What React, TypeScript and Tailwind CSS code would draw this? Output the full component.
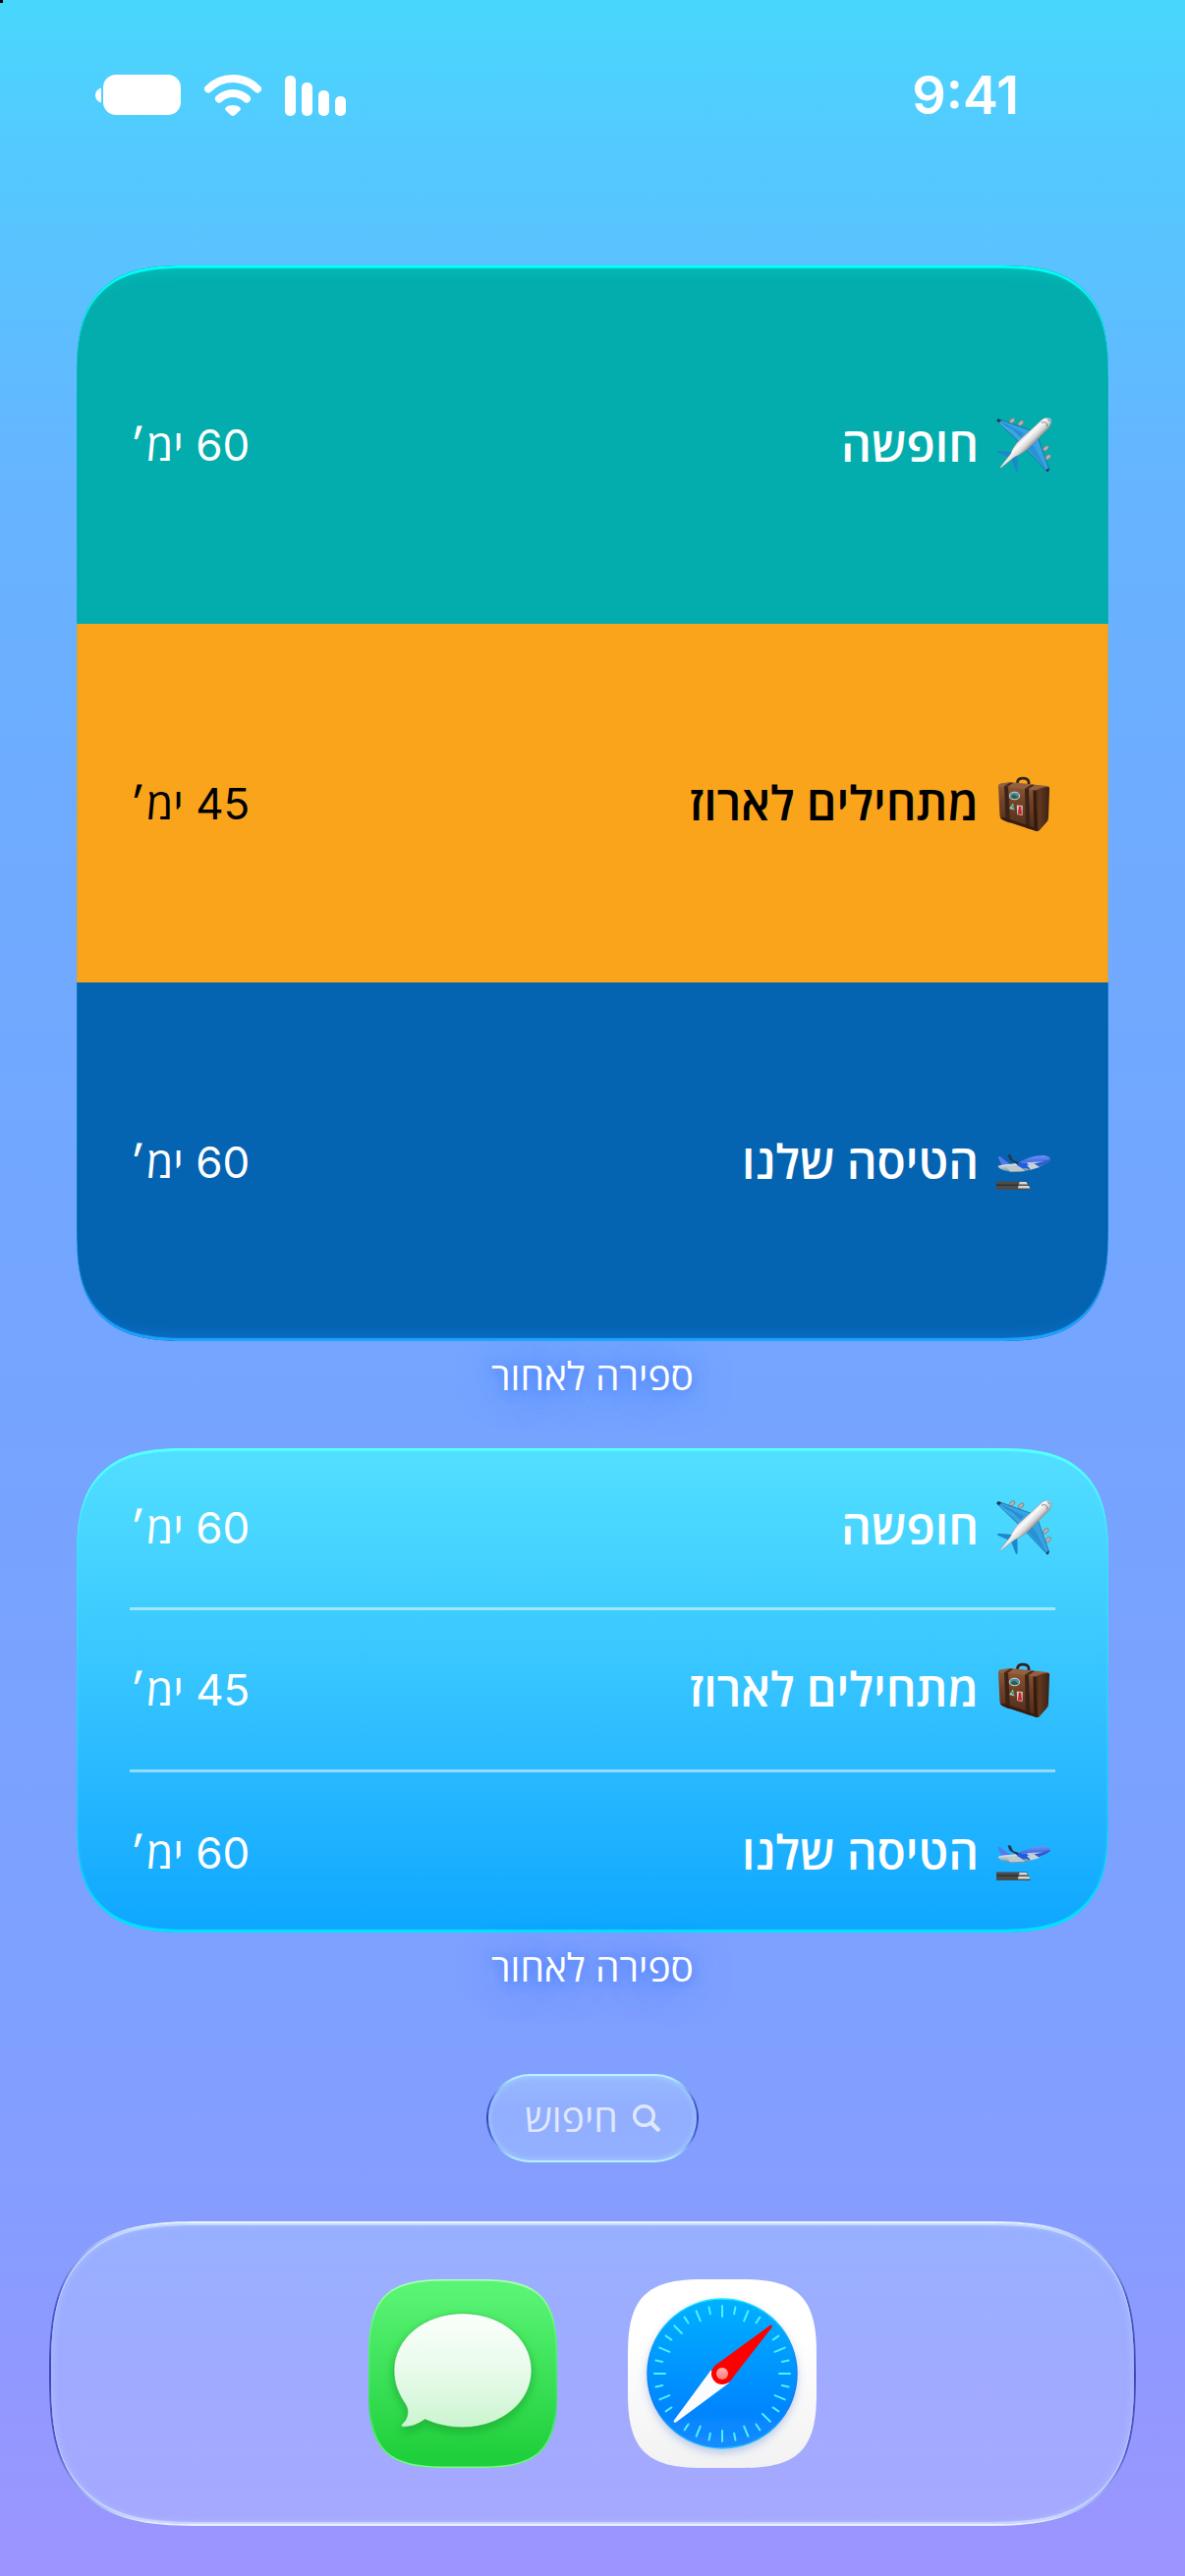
import { type ReactNode } from "react";

const SQUIRCLE =
  "M0 75C0 19 19 0 75 0H117C173 0 192 19 192 75V117C192 173 173 192 117 192H75C19 192 0 173 0 117Z";

function AirplaneIcon() {
  return (
    <svg viewBox="0 0 180 168" className="h-[56px] w-[60px] shrink-0" aria-hidden="true">
      <defs>
        <linearGradient id="fuselage" x1="70" y1="60" x2="105" y2="95" gradientUnits="userSpaceOnUse">
          <stop offset="0" stopColor="#c9c9c9" />
          <stop offset="0.35" stopColor="#fbfbfb" />
          <stop offset="0.65" stopColor="#d8d8d8" />
          <stop offset="1" stopColor="#777" />
        </linearGradient>
      </defs>
      <g fill="#b5b3b1" stroke="#74706e" strokeWidth="2">
        <ellipse cx="48" cy="10" rx="10" ry="6" transform="rotate(-42 48 10)" />
        <ellipse cx="75" cy="17" rx="10" ry="6" transform="rotate(-42 75 17)" />
        <ellipse cx="151" cy="94" rx="10" ry="6" transform="rotate(-42 151 94)" />
        <ellipse cx="158" cy="121" rx="10" ry="6" transform="rotate(-42 158 121)" />
      </g>
      <path d="M1 10L6 4L112 42L72 78Z" fill="#35a3e4" stroke="#1c5f8e" strokeWidth="2" />
      <path d="M156 166L161 158L126 58L90 96Z" fill="#35a3e4" stroke="#1c5f8e" strokeWidth="2" />
      <path d="M14 12L84 48L66 70Z" fill="#258fd2" />
      <path d="M3 14L50 50L74 78L82 68L48 36Z" fill="#53b5ec" opacity=".55" />
      <path d="M154 162L118 92L104 78L94 92L120 122Z" fill="#1f80c0" opacity=".5" />
      <path d="M1 9L6 4L16 9L8 15Z" fill="#16374e" />
      <path d="M152 160L161 154L159 164L155 166Z" fill="#16374e" />
      <path d="M2 106L6 101L52 106L42 124Z" fill="#1e86ca" />
      <path d="M60 165L65 163L64 116L46 128Z" fill="#1e86ca" />
      <path
        d="M142 4C154-2 164 1 167 6C170 14 165 26 158 34L98 94C84 107 70 115 55 121L14 154L11 152L44 110C48 96 60 80 70 70Z"
        fill="url(#fuselage)"
        stroke="#858585"
        strokeWidth="1.5"
      />
      <path d="M138 16C150 10 158 18 154 28" fill="none" stroke="#7d7d7d" strokeWidth="3" />
      <path d="M154 4C161 3 166 8 165 14C161 12 158 8 154 4Z" fill="#5a9bd0" />
    </svg>
  );
}

function SuitcaseIcon() {
  return (
    <svg viewBox="0 0 60 56" className="h-[56px] w-[60px] shrink-0" aria-hidden="true">
      <defs>
        <linearGradient id="case-front" x1="0" y1="0" x2="0" y2="1">
          <stop offset="0" stopColor="#8b5636" />
          <stop offset="0.4" stopColor="#6f4026" />
          <stop offset="1" stopColor="#4f2b19" />
        </linearGradient>
        <linearGradient id="case-side" x1="0" y1="0" x2="1" y2="0">
          <stop offset="0" stopColor="#3c2014" />
          <stop offset="0.3" stopColor="#62391f" />
          <stop offset="1" stopColor="#3b2115" />
        </linearGradient>
      </defs>
      <path d="M21.500 10V6C22 .8 32 .8 33 6V11" fill="none" stroke="#33231c" strokeWidth="2.8" />
      <path d="M2 10Q2 8 4 7.500L14 6L52 10Q54.500 10.500 54 13L40 17Z" fill="#94603d" />
      <path d="M2 10Q20 11 39 14.500L41 56L7 45Q4 44 3.500 40Z" fill="url(#case-front)" />
      <path d="M39 15Q46 11 53 11Q54.500 11.500 54 14L53 42Q53 45 51 47L44 55Q42 56.500 40 55Z" fill="url(#case-side)" />
      <path d="M8 10L12 10.500L14 47.500L9.500 46Z" fill="#3c2318" />
      <path d="M29 12.500L33 13L34.500 54L30 52.500Z" fill="#3c2318" />
      <path d="M8 10L14 6.500L17 7L12 10.500ZM29 12.500L36 8.500L39 9L33 13Z" fill="#4a2c1d" />
      <path d="M37.500 14L40 15L42 56L38.500 55Z" fill="#34190f" />
      <path d="M4 42L8 45L41 56L44 55L40 53L8 42Z" fill="#351c11" />
      <ellipse cx="18.500" cy="20" rx="5.600" ry="4.300" fill="#c3d8d4" />
      <ellipse cx="18.500" cy="20" rx="4.600" ry="3.300" fill="#4d8ca8" />
      <path d="M14.500 21L18 18.500L22.500 21.500Q18 25 14.500 21Z" fill="#315d45" />
      <path d="M13 33L17 27.500L18.500 34.500Z" fill="#a3ccaa" />
      <path d="M15 31L17.500 29L18 34Z" fill="#3d8e8c" />
      <path d="M20.800 29.500L26.800 30L26.600 40L21.200 39Z" fill="#cfc8c4" />
      <path d="M23 30.500L25.200 31L26 39L21.800 38.500Z" fill="#c9252c" />
    </svg>
  );
}

function DepartureIcon() {
  return (
    <svg viewBox="0 0 60 56" className="h-[56px] w-[60px] shrink-0" aria-hidden="true">
      <defs>
        <linearGradient id="jet" x1="0" y1="0" x2="0.150" y2="1">
          <stop offset="0" stopColor="#7ba4ff" />
          <stop offset="0.45" stopColor="#456fe0" />
          <stop offset="0.55" stopColor="#dbe4ea" />
          <stop offset="1" stopColor="#6f8b91" />
        </linearGradient>
      </defs>
      <path d="M1.500 22.500L3.500 22L14 30L11 34L6 32Z" fill="#5879ee" />
      <path
        d="M1.500 32C8 29 16 31 24 27.500C32 23.500 42 20.500 50 21.200C54 22 56 24.500 54.500 26.500C48 31.500 36 36 27 37.500C16 39 7 37 3 34Z"
        fill="url(#jet)"
      />
      <path d="M30 31C40 29 48 27.500 54.800 25C54 29.500 38 34.500 32 35Z" fill="#2f5bd0" />
      <path d="M10 33L23 31L29 37L14 37.500Z" fill="#bcc9ce" />
      <path d="M11.500 20.500L14.500 20.200L17 26L38 33L36 35L24 32L13.500 25.500Z" fill="#24354d" />
      <path d="M22 28.500L31 28.500L35 33.500L27 34.500L21 31Z" fill="#1d5de0" />
      <path d="M31 31L38 29L44 33L35 35.500Z" fill="#c8d2dc" />
      <path d="M0 47.500H31L35 56H0Z" fill="#4b4b4b" />
      <path d="M0 50.500H22V52H0Z" fill="#303030" />
      <path d="M23.500 48H30.500L32 50.500H23ZM22.500 52H33L34.500 54.500H22Z" fill="#d9d9d9" />
    </svg>
  );
}

type Item = { name: string; left: string; icon: ReactNode; tint: string };

const items: Item[] = [
  { name: "חופשה", left: "60 ימ׳", icon: <AirplaneIcon />, tint: "bg-[#04adad] text-white" },
  { name: "מתחילים לארוז", left: "45 ימ׳", icon: <SuitcaseIcon />, tint: "bg-[#faa41c] text-black" },
  { name: "הטיסה שלנו", left: "60 ימ׳", icon: <DepartureIcon />, tint: "bg-[#0564b2] text-white" },
];

function RowContent({ item }: { item: Item }) {
  return (
    <>
      <span className="flex items-center gap-[18px]">
        {item.icon}
        <span className="text-[48px] leading-[60px] font-semibold">{item.name}</span>
      </span>
      <span className="text-[44px] leading-[60px]">{item.left}</span>
    </>
  );
}

function Caption() {
  return (
    <p className="pt-[14px] pb-[20px] text-center text-[39px] leading-[44px] font-medium text-white [text-shadow:0_4px_40px_#3f78ff,0_2px_12px_#4a80ff]">
      ספירה לאחור
    </p>
  );
}

function StatusBar() {
  return (
    <header className="flex items-center justify-between pt-[64px] pr-[169px] pb-[140px] pl-[97px] text-white">
      <time className="text-[54px] leading-[66px] font-semibold">9:41</time>
      <div className="flex items-center gap-[24px]">
        <svg viewBox="0 0 62 42" className="h-[42px] w-[62px]" fill="currentColor" role="img" aria-label="קליטה">
          <rect x="0" y="1" width="11" height="41" rx="5" />
          <rect x="17" y="8" width="11" height="34" rx="5" />
          <rect x="34" y="16" width="11" height="26" rx="5" />
          <rect x="51" y="22" width="11" height="20" rx="5" />
        </svg>
        <svg viewBox="0 0 58 42" className="h-[42px] w-[58px]" fill="none" stroke="currentColor" role="img" aria-label="אלחוטי">
          <path d="M4 14.500C18 .5 40 .5 54 14.500" strokeWidth="8" strokeLinecap="round" />
          <path d="M15 24.500C23 17 35 17 43 24.500" strokeWidth="8" strokeLinecap="round" />
          <path
            d="M21.500 35C21 30.500 37 30.500 36.500 35C36 37 31 41 29 41.800C27 41 22 37 21.500 35Z"
            fill="currentColor"
            strokeWidth="1"
          />
        </svg>
        <svg viewBox="0 0 87 42" className="h-[42px] w-[87px]" fill="currentColor" role="img" aria-label="סוללה">
          <rect x="8" y="0" width="79" height="41" rx="13" />
          <path d="M6 13.500C-2 16 -2 26 6 28.500Z" />
        </svg>
      </div>
    </header>
  );
}

function MessagesIcon() {
  return (
    <svg viewBox="0 0 192 192" className="size-[192px]" aria-hidden="true">
      <defs>
        <linearGradient id="msg-bg" x1="0" y1="0" x2="0" y2="1">
          <stop offset="0.05" stopColor="#5af475" />
          <stop offset="0.95" stopColor="#1fcf3b" />
        </linearGradient>
        <linearGradient id="msg-rim" x1="0" y1="0" x2="0" y2="1">
          <stop offset="0" stopColor="#b4ffbc" />
          <stop offset="0.25" stopColor="#5cf878" />
          <stop offset="0.7" stopColor="#35e05a" />
          <stop offset="1" stopColor="#7dfa8c" />
        </linearGradient>
        <linearGradient id="bubble" x1="0" y1="0" x2="0" y2="1">
          <stop offset="0" stopColor="#fafffb" />
          <stop offset="0.5" stopColor="#e9fbeb" />
          <stop offset="1" stopColor="#cbf5d0" />
        </linearGradient>
        <filter id="bubble-shadow" x="-20%" y="-20%" width="140%" height="150%">
          <feDropShadow dx="0" dy="4" stdDeviation="5" floodColor="#0a8a22" floodOpacity=".5" />
        </filter>
        <clipPath id="msg-clip">
          <path d={SQUIRCLE} />
        </clipPath>
      </defs>
      <g clipPath="url(#msg-clip)">
        <path d={SQUIRCLE} fill="url(#msg-bg)" stroke="url(#msg-rim)" strokeWidth="3" />
      </g>
      <path
        d="M96 34.700C135 34.700 166 60 166 92.700C166 125 135 150.700 96 150.700C82 150.700 69 147.800 57.500 142.500C51 147.500 42 151 33.800 150C33 149 33.200 148 34.500 147C40 142 42 134 37.500 127C31 117 26 107 26 92.700C26 60 57 34.700 96 34.700Z"
        fill="url(#bubble)"
        filter="url(#bubble-shadow)"
        stroke="#16b136"
        strokeOpacity=".5"
        strokeWidth="1"
      />
    </svg>
  );
}

function SafariIcon() {
  const ticks = Array.from({ length: 32 }, (_, i) => i).filter((i) => i !== 4 && i !== 20);
  return (
    <svg viewBox="0 0 192 192" className="size-[192px]" aria-hidden="true">
      <defs>
        <linearGradient id="saf-bg" x1="0" y1="0" x2="0" y2="1">
          <stop offset="0.3" stopColor="#ffffff" />
          <stop offset="1" stopColor="#f2f2f3" />
        </linearGradient>
        <linearGradient id="dial" x1="0" y1="0" x2="0" y2="1">
          <stop offset="0" stopColor="#00b1ff" />
          <stop offset="0.75" stopColor="#0085ff" />
          <stop offset="1" stopColor="#1a8cff" />
        </linearGradient>
        <linearGradient id="dial-rim" x1="0" y1="0" x2="0" y2="1">
          <stop offset="0" stopColor="#1de9ff" />
          <stop offset="0.35" stopColor="#0a8df5" />
          <stop offset="0.7" stopColor="#0b74f0" />
          <stop offset="1" stopColor="#20c4ff" />
        </linearGradient>
        <linearGradient id="hub" x1="0" y1="0" x2="0" y2="1">
          <stop offset="0" stopColor="#ffb3b3" />
          <stop offset="1" stopColor="#ff7a7a" />
        </linearGradient>
        <filter id="dial-shadow" x="-20%" y="-20%" width="140%" height="150%">
          <feDropShadow dx="0" dy="4" stdDeviation="4" floodColor="#4a7ac8" floodOpacity=".35" />
        </filter>
      </defs>
      <path d={SQUIRCLE} fill="url(#saf-bg)" />
      <circle cx="96" cy="96" r="76" fill="url(#dial)" stroke="url(#dial-rim)" strokeWidth="1.500" filter="url(#dial-shadow)" />
      <g stroke="#4ff0ff" strokeWidth="2" strokeLinecap="round">
        {ticks.map((i) => (
          <line key={i} x1="96" x2="96" y1="27" y2={i % 2 === 0 ? 38 : 34} transform={`rotate(${i * 11.25} 96 96)`} />
        ))}
      </g>
      <path d="M47 143.500L84.500 92.500L103 105.500L49 145.500C47 146.500 46 145 47 143.500Z" fill="#fafcff" />
      <path d="M89 87.500L144.500 47C146.500 46 147.500 47.500 146.500 49L105 102.500Z" fill="#ff0000" />
      <circle cx="96" cy="96" r="11" fill="#ff0000" />
      <circle cx="96" cy="96" r="6" fill="url(#hub)" />
    </svg>
  );
}

export default function App() {
  return (
    <div
      dir="rtl"
      lang="he"
      className="relative flex min-h-screen w-full flex-col bg-[linear-gradient(180deg,#48d7fc_0%,#54c9ff_6%,#66b4ff_19%,#6fabff_32%,#75a4ff_55%,#7fa0ff_78%,#869dff_86%,#9d94ff_100%)] pb-[51px] font-[Inter,'Open_Sans',sans-serif]"
    >
      <span className="absolute top-0 left-0 size-[3px] bg-black" />
      <StatusBar />

      <main className="px-[78px]">
        <section aria-label="ספירה לאחור" className="relative overflow-hidden rounded-[115px] [corner-shape:superellipse(1.5)]">
          <ul>
            {items.map((item) => (
              <li key={item.name} className={`flex min-h-[365px] items-center justify-between px-[54px] ${item.tint}`}>
                <RowContent item={item} />
              </li>
            ))}
          </ul>
          <div className="pointer-events-none absolute inset-0 rounded-[115px] shadow-[inset_0_3px_1px_#00fff4,inset_0_-3px_1px_#1aa5ff,inset_0_20px_16px_-16px_rgba(0,220,220,0.5),inset_0_-20px_16px_-16px_rgba(24,130,240,0.5)] [corner-shape:superellipse(1.5)]" />
        </section>
        <Caption />

        <section
          aria-label="ספירה לאחור"
          className="mt-[31px] rounded-[115px] bg-[linear-gradient(180deg,#52dfff_0%,#3ccaff_38%,#28b8ff_68%,#0ea7ff_100%)] px-[54px] shadow-[inset_0_3px_1px_#55ffff,inset_0_-3px_1px_#00e4ff,inset_0_0_4px_rgba(60,255,255,0.4)] [corner-shape:superellipse(1.5)]"
        >
          <ul className="divide-y-[3px] divide-white/50 text-white">
            {items.map((item) => (
              <li key={item.name} className="flex min-h-[165px] items-center justify-between last:min-h-[163px]">
                <RowContent item={item} />
              </li>
            ))}
          </ul>
        </section>
        <Caption />
      </main>

      <button
        type="button"
        className="mx-auto mt-[66px] flex h-[90px] items-center gap-[15px] rounded-full border-2 border-transparent px-[37px] text-[39px] leading-[44px] font-medium text-[#dfe8ff] shadow-[inset_0_0_6px_rgba(170,225,255,0.8)] [background:linear-gradient(180deg,#97b9ff,#91aeff_40%,#94b0ff)_padding-box,linear-gradient(180deg,#b8f0ff_5%,#4a66d8_30%,#3844b4_50%,#4a66d8_70%,#b8f0ff_95%)_border-box]"
      >
        <svg viewBox="0 0 28 28" className="size-[28px]" fill="none" stroke="currentColor" strokeLinecap="round" aria-hidden="true">
          <circle cx="11.500" cy="11.500" r="9.800" strokeWidth="3.400" />
          <path d="M19.500 19.500L25.500 25.500" strokeWidth="4.500" />
        </svg>
        חיפוש
      </button>

      <nav
        aria-label="Dock"
        className="mx-[50px] mt-[60px] flex justify-center gap-[72px] rounded-[155px] border-2 border-transparent py-[57px] shadow-[inset_0_2px_1px_rgba(215,232,255,0.7),inset_0_-2px_1px_rgba(215,232,255,0.7),inset_0_0_10px_rgba(200,215,255,0.5)] [background:linear-gradient(180deg,#98b0ff_0%,#a0aaff_55%,#a6a9ff_100%)_padding-box,linear-gradient(180deg,#eefaff_0%,#b4c8ff_5%,#5560cc_25%,#3c45b0_50%,#5560cc_75%,#b4c8ff_95%,#f0f5ff_100%)_border-box] [corner-shape:superellipse(1.5)]"
      >
        <button type="button" aria-label="Safari">
          <SafariIcon />
        </button>
        <button type="button" aria-label="Messages">
          <MessagesIcon />
        </button>
      </nav>
    </div>
  );
}
